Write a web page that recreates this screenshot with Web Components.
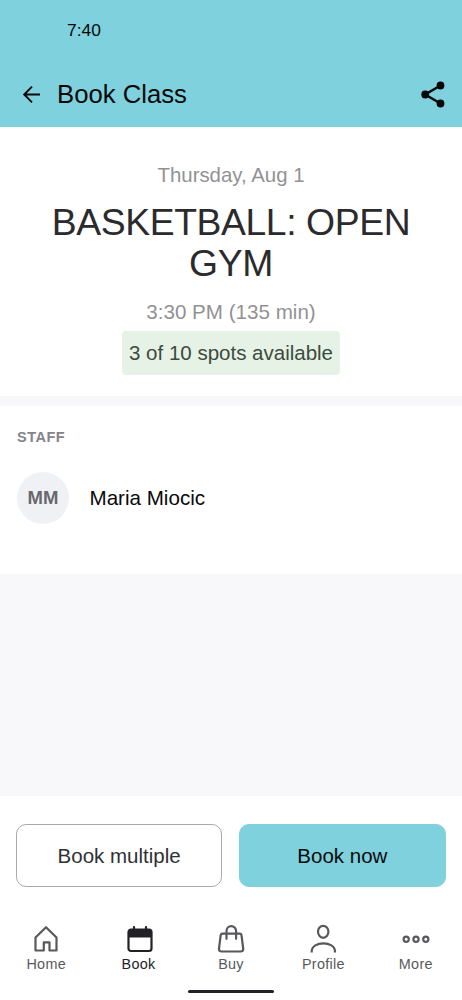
<!DOCTYPE html>
<html lang="en">
<head>
<meta charset="utf-8">
<title>Book Class</title>
<style>
body{margin:0;font-family:"Liberation Sans",Arial,sans-serif}
</style>
</head>
<body>
<booking-screen></booking-screen>
<script>
const define = (name, html) => {
  const t = document.createElement('template');
  t.innerHTML = html;
  customElements.define(name, class extends HTMLElement {
    constructor() {
      super();
      this.attachShadow({mode: 'open'}).appendChild(t.content.cloneNode(true));
    }
  });
};

define('app-header', `
<style>
:host{display:flex;flex-direction:column;height:127px;background:#7fd1dd;color:#050808}
.status{height:61px;padding-left:67px;font-size:17.400px;line-height:60px;box-sizing:border-box}
.bar{display:flex;align-items:center;height:66px;padding:0 14px 0 20px}
.title{flex:1;font-size:25.700px;line-height:30px;padding-left:13px}
svg{display:block}
</style>
<div class="status">7:40</div>
<div class="bar">
<svg width="24" height="24" viewBox="0 0 24 24" fill="none" stroke="currentColor" stroke-width="1.900"><path d="M20 12.500H4.500M12 4.700 4.200 12.500l7.800 7.800"/></svg>
<span class="title"><slot></slot></span>
<svg width="30" height="30" viewBox="0 0 30 30" fill="currentColor"><path d="M22.500 6.500 7.200 15.500l15.300 9" fill="none" stroke="currentColor" stroke-width="2.500"/><circle cx="22.500" cy="6.500" r="3.900"/><circle cx="7.200" cy="15.500" r="3.900"/><circle cx="22.500" cy="24.500" r="3.900"/></svg>
</div>`);

define('class-summary', `
<style>
:host{display:flex;flex-direction:column;align-items:center;height:269px;padding-top:36px;box-sizing:border-box;background:#fff;text-align:center}
.meta{font-size:20.400px;line-height:24px;color:#929295}
.time{font-size:20.600px}
h1{margin:15px 0 16px;width:400px;font-weight:400;font-size:37.300px;letter-spacing:-.400px;line-height:41px;color:#2b2b2e}
.badge{margin-top:7px;height:44px;line-height:44px;width:218px;border-radius:4px;background:#e6f2e5;color:#3d4a40;font-size:20.500px}
</style>
<div class="meta"><slot name="date"></slot></div>
<h1><slot></slot></h1>
<div class="meta time"><slot name="time"></slot></div>
<div class="badge"><slot name="spots"></slot></div>`);

define('staff-section', `
<style>
:host{display:block;height:168px;margin-top:10px;padding:22px 17px 0;box-sizing:border-box;background:#fff}
h2{margin:0;font-size:14.500px;line-height:18px;letter-spacing:.500px;color:#858588}
.row{display:flex;align-items:center;margin-top:26px;gap:20.500px;font-size:20.600px;line-height:22px;color:#090909}
.avatar{width:52px;height:52px;border-radius:50%;background:#f0f1f4;color:#68686e;font-weight:700;font-size:18.500px;line-height:52px;text-align:center}
</style>
<h2>STAFF</h2>
<div class="row"><div class="avatar"><slot name="initials"></slot></div><span><slot></slot></span></div>`);

define('action-button', `
<style>
:host{display:flex;align-items:center;justify-content:center;height:63px;padding-top:1px;box-sizing:border-box;border:1px solid #aaaaac;border-radius:10px;font-size:20.500px;line-height:24px;color:#303033;background:#fff;flex:1}
:host([primary]){background:#7fd1dd;border-color:#7fd1dd;color:#060a0b}
</style><slot></slot>`);

define('tab-item', `
<style>
:host{display:flex;flex-direction:column;align-items:center;flex:1;color:#59595c;font-size:14.400px;letter-spacing:.300px}
:host([active]){color:#222226}
.label{line-height:18px}
::slotted(svg){display:block;width:32px;height:32px}
</style><slot name="icon"></slot><span class="label"><slot></slot></span>`);

define('tab-bar', `
<style>
:host{display:flex;flex-direction:column;align-items:center;height:97px;box-sizing:border-box}
nav{display:flex;width:100%;padding-top:20px;height:87px;box-sizing:border-box}
.handle{width:86px;height:3px;border-radius:2px;background:#222226}
</style><nav><slot></slot></nav><div class="handle"></div>`);

define('booking-screen', `
<style>
:host{display:flex;flex-direction:column;height:1000px;background:#f8f8fa;overflow:hidden}
.footer{margin-top:auto;height:204px;background:#fff}
.actions{display:flex;gap:17px;padding:28.400px 16.500px 0 16px;height:107px;box-sizing:border-box}
</style>
<app-header>Book Class</app-header>
<class-summary><span slot="date">Thursday, Aug 1</span>BASKETBALL: OPEN GYM<span slot="time">3:30 PM (135 min)</span><span slot="spots">3 of 10 spots available</span></class-summary>
<staff-section><span slot="initials">MM</span>Maria Miocic</staff-section>
<div class="footer">
<div class="actions"><action-button>Book multiple</action-button><action-button primary>Book now</action-button></div>
<tab-bar>
<tab-item><svg slot="icon" viewBox="0 0 32 32" fill="none" stroke="currentColor" stroke-width="2.200" stroke-linejoin="round"><path d="M5.500 27.500V14.500L16 4.200l10.500 10.300v13h-7V19.300h-5.700v8.200Z"/></svg>Home</tab-item>
<tab-item active><svg slot="icon" viewBox="0 0 32 32" fill="none" stroke="currentColor" stroke-width="2.200"><rect x="5.500" y="6.500" width="23" height="21.500" rx="2.500"/><path d="M5.500 7h23v7.500h-23Z" fill="currentColor" stroke="none"/><path d="M11 4V8M23 4V8" stroke-linecap="round"/></svg>Book</tab-item>
<tab-item><svg slot="icon" viewBox="0 0 32 32" fill="none" stroke="currentColor" stroke-width="2.200" stroke-linecap="round" stroke-linejoin="round"><path d="M7.500 10.700h17.200q1.500 0 1.800 1.500l1.700 13.300q.3 3-2.600 3H6.600q-2.900 0-2.600-3L5.700 12.200q.3-1.500 1.800-1.500Z"/><path d="M11.500 15.800V8a4.800 4.800 0 0 1 9.600 0v7.800"/></svg>Buy</tab-item>
<tab-item><svg slot="icon" viewBox="0 0 32 32" fill="none" stroke="currentColor" stroke-width="2.200"><ellipse cx="16.200" cy="8.800" rx="5.200" ry="6"/><path d="M4.700 29.500v-1C4.700 17.700 28 17.700 28 28.500v1"/></svg>Profile</tab-item>
<tab-item><svg slot="icon" viewBox="0 0 32 32" fill="none" stroke="currentColor" stroke-width="2.200"><circle cx="6.200" cy="16.200" r="2.600"/><circle cx="16" cy="16.200" r="2.600"/><circle cx="25.800" cy="16.200" r="2.600"/></svg>More</tab-item>
</tab-bar>
</div>`);
</script>
</body>
</html>
